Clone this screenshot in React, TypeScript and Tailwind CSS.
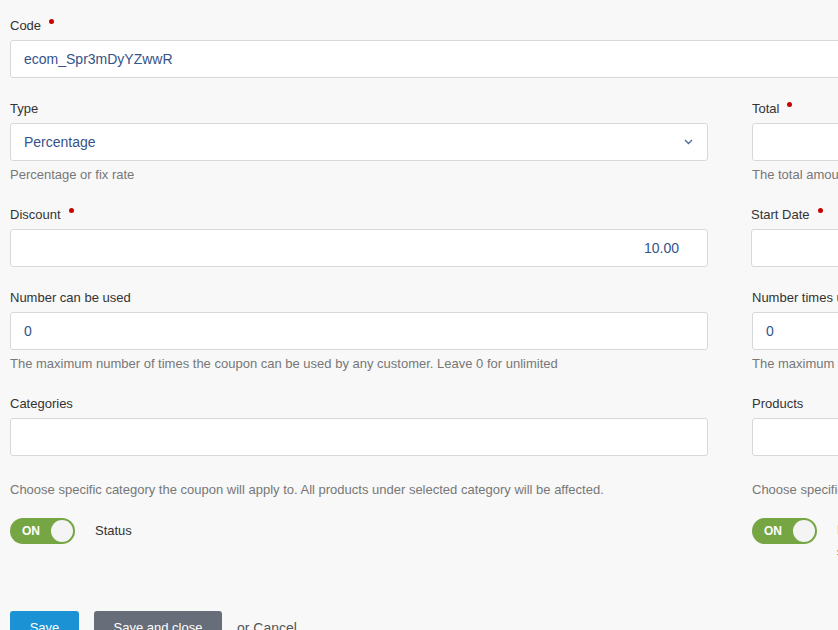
import React from 'react';

const font = { fontFamily: '"Liberation Sans", Arial, sans-serif' };

const Label = ({ text, required }: { text: string; required?: boolean }) => (
  <div className="flex items-start h-[19px] pt-[1px] mb-[5px] text-[13px] leading-[18px] text-[#333]">
    <span>{text}</span>
    {required && <span className="ml-[8px] mt-[2px] w-[5px] h-[5px] rounded-full bg-[#c70000]" />}
  </div>
);

const Input = ({ value, align }: { value?: string; align?: 'right' }) => (
  <div
    className={`h-[38px] bg-white border border-[#d6d9dc] rounded-[3px] flex items-center text-[14px] text-[#34538a] ${
      align === 'right' ? 'justify-end pr-[28px]' : 'pl-[13px]'
    }`}
  >
    {value}
  </div>
);

const Select = ({ value }: { value: string }) => (
  <div className="h-[38px] bg-white border border-[#d6d9dc] rounded-[3px] flex items-center justify-between pl-[13px] pr-[14px] text-[14px] text-[#34538a]">
    <span>{value}</span>
    <svg width="9" height="6" viewBox="0 0 9 6" fill="none">
      <path d="M1 1l3.5 3.5L8 1" stroke="#4a6a9a" strokeWidth="1.3" />
    </svg>
  </div>
);

const Help = ({ text, top = 'mt-[5px]' }: { text: string; top?: string }) => (
  <div className={`${top} text-[13px] leading-[18px] text-[#777] whitespace-nowrap overflow-hidden`}>{text}</div>
);

const Toggle = () => (
  <div className="w-[65px] h-[26px] rounded-full bg-[#76a544] flex items-center justify-between pl-[12px] pr-[2px] shrink-0">
    <span className="text-[12px] font-bold text-white">ON</span>
    <span className="w-[22px] h-[22px] rounded-full bg-[#f4f4f4]" />
  </div>
);

export default function App() {
  return (
    <div className="w-full h-[630px] overflow-hidden bg-[#f8f8f8]" style={font}>
      <div className="w-[1460px] pl-[10px] pt-[16px]">
        <div className="w-[1440px]">
          <div className="mb-[21px]">
            <Label text="Code" required />
            <Input value="ecom_Spr3mDyYZwwR" />
          </div>

          <div className="grid grid-cols-[698px_698px] gap-x-[44px] items-start">
            <div className="mb-[21px]">
              <Label text="Type" />
              <Select value="Percentage" />
              <Help text="Percentage or fix rate" />
            </div>
            <div className="mb-[21px]">
              <Label text="Total" required />
              <Input />
              <Help text="The total amount of the order before the coupon can be applied" />
            </div>

            <div className="mb-[21px]">
              <Label text="Discount" required />
              <Input value="10.00" align="right" />
            </div>
            <div className="mb-[21px] -ml-[1px]">
              <Label text="Start Date" required />
              <Input />
            </div>

            <div className="mb-[21px]">
              <Label text="Number can be used" />
              <Input value="0" />
              <Help text="The maximum number of times the coupon can be used by any customer. Leave 0 for unlimited" />
            </div>
            <div className="mb-[21px]">
              <Label text="Number times used by a customer" />
              <Input value="0" />
              <Help text="The maximum number of times the coupon can be used by a single customer" />
            </div>

            <div className="mb-[19px]">
              <Label text="Categories" />
              <Input />
              <Help text="Choose specific category the coupon will apply to. All products under selected category will be affected." top="mt-[25px]" />
            </div>
            <div className="mb-[19px]">
              <Label text="Products" />
              <Input />
              <Help text="Choose specific products the coupon will apply to." top="mt-[25px]" />
            </div>

            <div className="h-[26px] flex items-center gap-[20px]">
              <Toggle />
              <span className="text-[13px] text-[#333]">Status</span>
            </div>
            <div className="h-[26px] flex items-start gap-[20px]">
              <Toggle />
              <div className="w-[40px] pt-[1px] text-[13px] leading-[22px] text-[#333]">Free shipping</div>
            </div>
          </div>

          <div className="flex items-center mt-[67px]">
            <button className="h-[34px] w-[69px] rounded-[3px] bg-[#1a92d4] text-white text-[13px]">Save</button>
            <button className="ml-[15px] h-[34px] w-[128px] rounded-[3px] bg-[#676e7a] text-white text-[13px]">Save and close</button>
            <span className="ml-[15px] text-[14px] text-[#555]">or Cancel</span>
          </div>
        </div>
      </div>
    </div>
  );
}
